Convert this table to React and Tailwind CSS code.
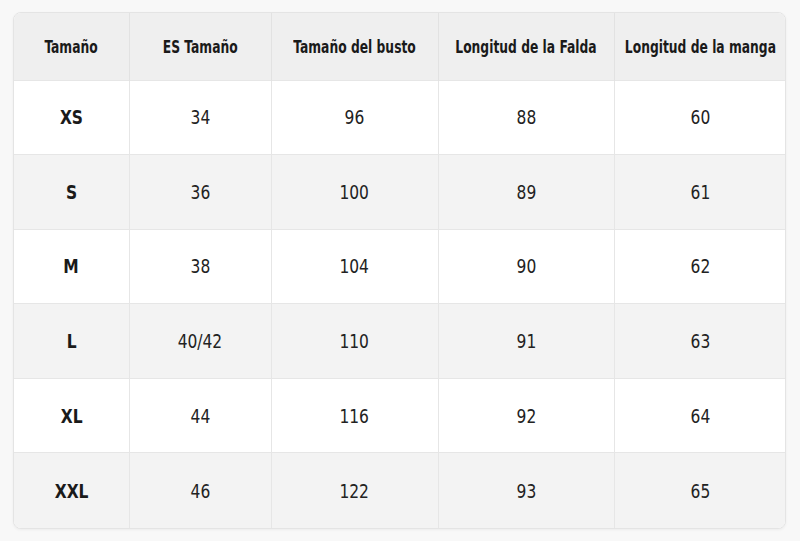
import React from "react";

const headers = [
  "Tamaño",
  "ES Tamaño",
  "Tamaño del busto",
  "Longitud de la Falda",
  "Longitud de la manga",
];

const rows = [
  ["XS", "34", "96", "88", "60"],
  ["S", "36", "100", "89", "61"],
  ["M", "38", "104", "90", "62"],
  ["L", "40/42", "110", "91", "63"],
  ["XL", "44", "116", "92", "64"],
  ["XXL", "46", "122", "93", "65"],
];

const widths = ["w-[115px]", "w-[142px]", "w-[167px]", "w-[176px]", "w-[173px]"];

// condensed DIN-ish look: DejaVu Sans Condensed squeezed a bit more
function Narrow({ children, className }) {
  return (
    <div className="flex justify-center">
      <span className={`whitespace-nowrap ${className}`}>{children}</span>
    </div>
  );
}

export default function App() {
  return (
    <div
      className="min-h-[541px] w-[800px] bg-[#f8f8f8] pt-[12px] pl-[13px]"
      style={{ fontFamily: '"DejaVu Sans Condensed", "Liberation Sans", sans-serif' }}
    >
      <div className="w-[773px] overflow-hidden rounded-[8px] border border-[#e4e4e4] bg-white shadow-[0_1px_3px_rgba(0,0,0,0.05)]">
        <table className="w-full table-fixed border-collapse text-[#1a1a1a]">
          <colgroup>
            {widths.map((w, i) => (
              <col key={i} className={w} />
            ))}
          </colgroup>
          <thead>
            <tr className="h-[67px] bg-[#efefef]">
              {headers.map((h, i) => (
                <th
                  key={h}
                  className={`align-middle ${i > 0 ? "border-l border-[#e2e2e2]" : ""}`}
                >
                  <Narrow className="scale-x-[0.76] text-[18px] font-bold">{h}</Narrow>
                </th>
              ))}
            </tr>
          </thead>
          <tbody>
            {rows.map((row, r) => (
              <tr
                key={row[0]}
                className={`h-[74.6px] border-t border-[#e6e6e6] ${
                  r % 2 === 1 ? "bg-[#f3f3f3]" : "bg-white"
                }`}
              >
                {row.map((cell, i) => (
                  <td
                    key={i}
                    className={`align-middle ${i > 0 ? "border-l border-[#e6e6e6]" : ""}`}
                  >
                    <Narrow
                      className={`scale-x-[0.86] text-[20px] ${
                        i === 0 ? "font-bold" : "font-normal text-[#222]"
                      }`}
                    >
                      {cell}
                    </Narrow>
                  </td>
                ))}
              </tr>
            ))}
          </tbody>
        </table>
      </div>
    </div>
  );
}
